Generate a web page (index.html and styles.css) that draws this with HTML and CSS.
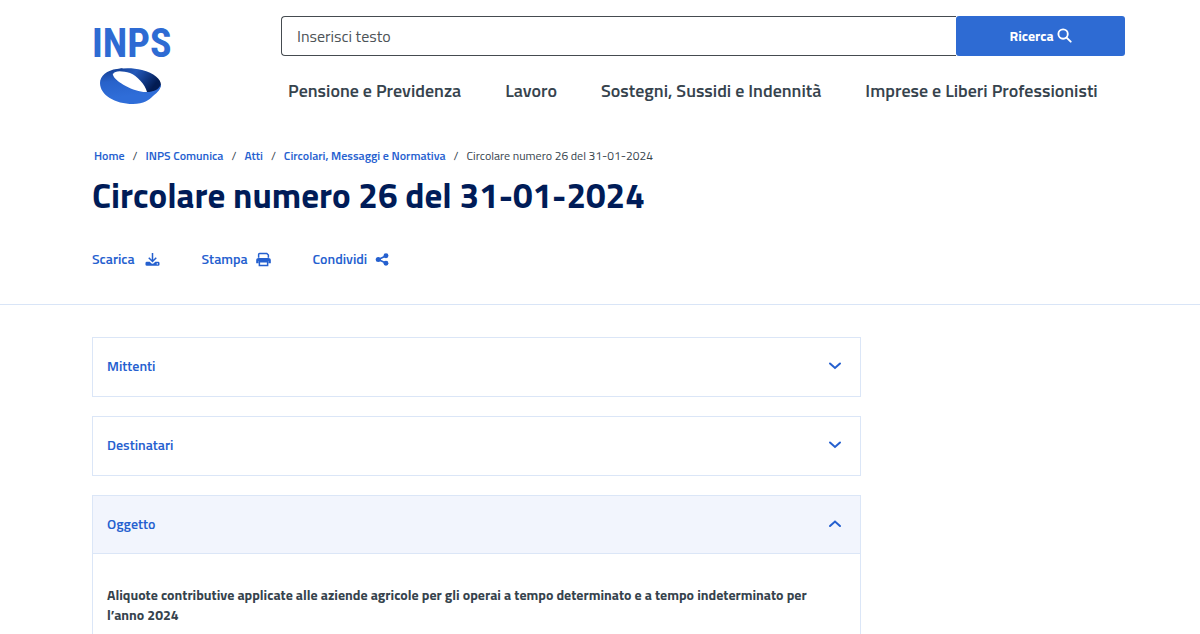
FILE: index.html
```html
<!DOCTYPE html>
<html lang="it">
<head>
<meta charset="utf-8">
<meta name="viewport" content="width=device-width, initial-scale=1">
<title>Circolare numero 26 del 31-01-2024</title>
<link rel="stylesheet" href="styles.css">
</head>
<body>
<header class="header">
  <a class="logo" href="#">
    <span class="logo-name">INPS</span>
    <svg class="logo-ring" viewBox="0 0 62 37" aria-hidden="true">
      <defs>
        <linearGradient id="band" x1="0" y1="0" x2="1" y2=".35">
          <stop offset="0" stop-color="#2d6bd2"/>
          <stop offset=".2" stop-color="#16439b"/>
          <stop offset=".5" stop-color="#2459ba"/>
          <stop offset=".8" stop-color="#0f3580"/>
          <stop offset="1" stop-color="#021b52"/>
        </linearGradient>
        <linearGradient id="front" x1=".2" y1="0" x2=".35" y2=".8">
          <stop offset="0" stop-color="#143d90"/>
          <stop offset=".45" stop-color="#2862ca"/>
          <stop offset="1" stop-color="#2f6dd8"/>
        </linearGradient>
      </defs>
      <path fill="url(#band)" d="M9 4C17 0 30 -1 42 2C54 5 61 11 61 17C60 22 54 25 47 24C45 16 37 8 30 5C23 3 15 2 13 6Z"/>
      <path fill="url(#front)" d="M17 1C7 2 0 8 0 15C0 27 15 36 33 36C44 36 49 32 53 28C58 24 61 21 61 16C59 22 53 24 47 24C36 25 15 14 13 7C12 4 15 2 20 3L23 0Z"/>
    </svg>
  </a>
  <div class="header-main">
    <form class="search" role="search">
      <input class="search-input" type="text" placeholder="Inserisci testo" aria-label="Inserisci testo">
      <button class="search-button" type="button">Ricerca
        <svg class="icon-search" viewBox="0 0 16 16" aria-hidden="true"><circle cx="6.5" cy="6.5" r="5"/><path d="M10.2 10.2L14.6 14.6"/></svg>
      </button>
    </form>
    <nav class="nav" aria-label="Principale">
      <a href="#">Pensione e Previdenza</a>
      <a href="#">Lavoro</a>
      <a href="#">Sostegni, Sussidi e Indennità</a>
      <a href="#">Imprese e Liberi Professionisti</a>
    </nav>
  </div>
</header>
<section class="intro">
  <nav aria-label="Percorso">
    <ol class="breadcrumb">
      <li><a href="#">Home</a></li>
      <li><a href="#">INPS Comunica</a></li>
      <li><a href="#">Atti</a></li>
      <li><a href="#">Circolari, Messaggi e Normativa</a></li>
      <li aria-current="page">Circolare numero 26 del 31-01-2024</li>
    </ol>
  </nav>
  <h1 class="title">Circolare numero 26 del 31-01-2024</h1>
  <div class="actions">
    <button class="action action-download" type="button">Scarica
      <svg class="icon" viewBox="0 0 16 16" aria-hidden="true"><path fill="none" stroke="currentColor" stroke-width="1.6" d="M8 1V10M4 6.2L8 10.2L12 6.2"/><path fill="currentColor" fill-rule="evenodd" d="M2 10.500H5L7 12.2Q8 13 9 12.2L11 10.500H14Q15.500 10.500 15.500 12V13.200Q15.500 14.700 14 14.700H2Q.5 14.700 .5 13.200V12Q.5 10.500 2 10.500ZM12.500 12V13.200H13.800V12Z"/></svg>
    </button>
    <button class="action" type="button">Stampa
      <svg class="icon" viewBox="0 0 16 16" aria-hidden="true"><path fill="none" stroke="currentColor" stroke-width="1.600" d="M2.800 6V2.600Q2.800 1.600 3.800 1.600H11.500L13.200 3.200V6M3.600 10.400H12.400V14.400H3.600Z"/><path fill="currentColor" d="M3 6.400H13Q15.800 6.400 15.800 8.800V12H13.200V9.600H2.800V12H.2V8.800Q.2 6.400 3 6.400Z"/></svg>
    </button>
    <button class="action" type="button">Condividi
      <svg class="icon" viewBox="0 0 16 16" aria-hidden="true"><path fill="none" stroke="currentColor" stroke-width="1.700" d="M12 4L3.500 8L12 12"/><g fill="currentColor"><circle cx="3.500" cy="8" r="2.700"/><circle cx="11.700" cy="4" r="2.600"/><circle cx="11.700" cy="12" r="2.600"/></g></svg>
    </button>
  </div>
</section>
<main class="content">
  <section class="panel">
    <button class="panel-toggle" type="button" aria-expanded="false">Mittenti
      <svg class="chevron" viewBox="0 0 14 8" aria-hidden="true"><path d="M2 1.500L7 6L12 1.500"/></svg>
    </button>
  </section>
  <section class="panel">
    <button class="panel-toggle" type="button" aria-expanded="false">Destinatari
      <svg class="chevron" viewBox="0 0 14 8" aria-hidden="true"><path d="M2 1.500L7 6L12 1.500"/></svg>
    </button>
  </section>
  <section class="panel">
    <button class="panel-toggle panel-toggle-open" type="button" aria-expanded="true">Oggetto
      <svg class="chevron" viewBox="0 0 14 8" aria-hidden="true"><path d="M2 6L7 1.500L12 6"/></svg>
    </button>
    <p class="panel-body">Aliquote contributive applicate alle aziende agricole per gli operai a tempo determinato e a tempo indeterminato per l’anno 2024</p>
  </section>
</main>
</body>
</html>
```
FILE: styles.css
```css
* { box-sizing: border-box; }
body {
  margin: 0;
  background: #fff;
  color: #36434d;
  font-family: "Titillium Web", "Noto Sans", sans-serif;
  font-size: 14px;
}
a { color: inherit; text-decoration: none; }
button { font: inherit; cursor: pointer; }
.header {
  display: flex;
  gap: 112px;
  padding: 16px 75px 0 92px;
}
.logo {
  display: flex;
  flex-direction: column;
  align-items: flex-start;
  width: 77px;
  padding-top: 4px;
  color: #2e6bd3;
}
.logo-name {
  font: bold 40px/48px "Liberation Sans Narrow", "Roboto Condensed", "Liberation Sans", sans-serif;
}
.logo-ring { width: 62px; height: 37px; margin-left: 8px; }
.header-main { flex: 1; min-width: 0; }
.search { display: flex; height: 40px; }
.search-input {
  flex: 1;
  min-width: 0;
  padding: 0 15px;
  border: 1px solid #454b50;
  border-right: 0;
  border-radius: 4px 0 0 4px;
  font: inherit;
  font-size: 16px;
}
.search-input::placeholder { color: #4d5357; opacity: 1; }
.search-button {
  flex: 0 0 20%;
  display: flex;
  align-items: center;
  justify-content: center;
  gap: 3px;
  padding: 0 0 1px;
  border: 0;
  border-radius: 3px;
  background: #2e6bd3;
  color: #fff;
  font-weight: 700;
}
.icon-search {
  width: 15px;
  height: 15px;
  fill: none;
  stroke: currentColor;
  stroke-width: 2;
  stroke-linecap: round;
}
.nav {
  display: flex;
  gap: 44px;
  padding: 23px 0 0 7px;
  font-size: 18px;
  font-weight: 600;
  line-height: 24px;
  white-space: nowrap;
}
.intro {
  padding: 42px 92px 33px;
  border-bottom: 1px solid #d9e5f7;
}
.breadcrumb {
  display: flex;
  margin: 0;
  padding: 0 0 0 2px;
  list-style: none;
  font-size: 12px;
  line-height: 18px;
}
.breadcrumb a { color: #2560cf; font-weight: 600; }
.breadcrumb li + li::before { content: "/"; padding: 0 8px; }
.title {
  margin: 6px 0 28px;
  color: #001c58;
  font-size: 35px;
  font-weight: 700;
  line-height: 48px;
}
.actions { display: flex; gap: 42px; }
.action {
  display: flex;
  align-items: center;
  gap: 8px;
  padding: 0;
  border: 0;
  background: none;
  color: #2560cf;
  font-weight: 600;
  line-height: 24px;
}
.action-download { gap: 10px; }
.icon { width: 15px; height: 15px; }
.content {
  display: grid;
  gap: 19px;
  max-width: 861px;
  padding: 32px 0 32px 92px;
}
.panel { border: 1px solid #dbe6f7; }
.panel-toggle {
  display: flex;
  align-items: center;
  justify-content: space-between;
  width: 100%;
  padding: 16px 18px 18px 14px;
  border: 0;
  background: #fff;
  color: #2560cf;
  font-weight: 600;
  line-height: 24px;
}
.panel-toggle-open { padding-bottom: 17px; background: #f2f5fd; border-bottom: 1px solid #dbe6f7; }
.chevron {
  width: 14px;
  height: 8px;
  fill: none;
  stroke: currentColor;
  stroke-width: 2;
  stroke-linecap: round;
}
.panel-body {
  margin: 0;
  padding: 31px 14px;
  font-weight: 700;
  line-height: 20px;
}
```
